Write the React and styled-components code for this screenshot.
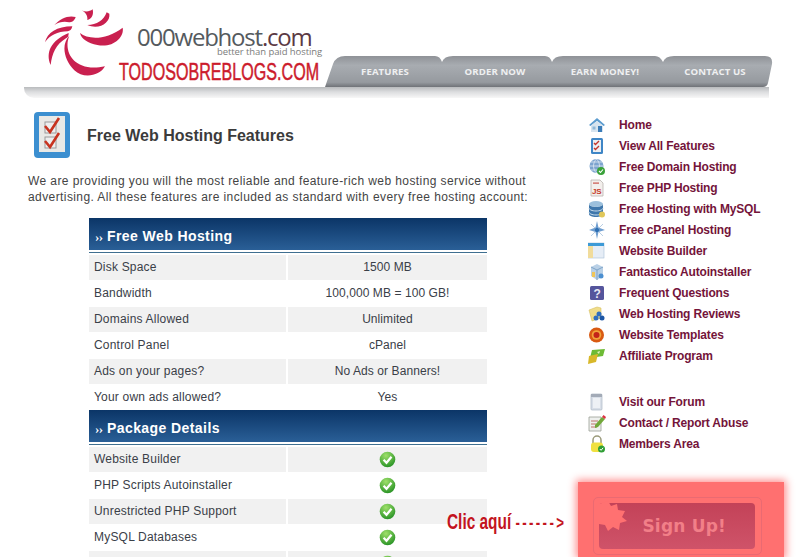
import React from "react";
import styled, { createGlobalStyle } from "styled-components";

const Global = createGlobalStyle`
  html, body { margin: 0; padding: 0; background: #fff; height: 557px; overflow: hidden; }
  #root { height: 557px; overflow: hidden; }
  * { box-sizing: border-box; }
`;
const Page = styled.div`
  width: 809px; height: 557px; overflow: hidden; position: relative;
  font-family: "Liberation Sans", Arial, sans-serif; color: #333;
`;
const Header = styled.header`display: flex; flex-direction: column; padding-left: 24px; height: 98px;`;
const HeaderTop = styled.div`display: flex; height: 63px; margin-top: 24px; position: relative;`;
const Brand = styled.div`width: 301px; flex: none; display: flex; padding-left: 21px; position: relative;`;
const LogoMark = styled.svg`position: absolute; left: 21px; top: -16px; width: 80px; height: 70px;`;
const Words = styled.div`margin-left: 71px; display: flex; flex-direction: column; align-items: flex-start;`;
const Wordmark = styled.div`
  font-family: "Open Sans", sans-serif; font-size: 24px; line-height: 26px; letter-spacing: -1.22px; color: #555a5e;
  padding-left: 21px;
  span { color: #5c3a44; }
`;
const Tagline = styled.div`
  font-family: "Open Sans", sans-serif; font-size: 9.5px; line-height: 9px; color: #7c7c7c; letter-spacing: -0.08px;
  margin-left: 101px; margin-top: -3px; white-space: nowrap;
`;
const Stamp = styled.div`
  font-size: 23.5px; line-height: 20px; color: #cc1b2c; font-weight: 400; margin-top: 6px; margin-left: 3px; white-space: nowrap;
  -webkit-text-stroke: 0.5px #cc1b2c; transform: scaleX(0.685); transform-origin: left center;
`;
const Nav = styled.nav`position: relative; width: 448px; height: 31px; margin-top: 32px; display: flex; padding-left: 5px;`;
const NavShape = styled.svg`position: absolute; left: 0; top: 0; width: 448px; height: 31px;`;
const NavLink = styled.a`
  position: relative; width: 110px; text-align: center; line-height: 31px; font-family: "Open Sans", sans-serif;
  font-size: 9.6px; font-weight: 700; color: #eff0f1; letter-spacing: 0.1px;
`;
const Band = styled.div`
  width: 745px; height: 11px; border-radius: 0 0 0 10px;
  background: linear-gradient(#b9bbbd, #dcdddf 45%, #f7f7f7);
`;
const Body = styled.div`display: flex;`;
const Main = styled.main`width: 560px; flex: none; padding: 14px 0 0 28px; position: relative;`;
const TitleRow = styled.div`display: flex; align-items: center; height: 46px; padding-left: 6px; gap: 17px;`;
const Title = styled.h1`margin: 2px 0 0; font-size: 16px; font-weight: 700; color: #3b3b3b; line-height: 20px;`;
const Intro = styled.p`
  margin: 15px 0 13px; width: 503px; font-size: 12px; line-height: 16px; color: #444; letter-spacing: 0.41px;
`;
const Table = styled.section`margin-left: 61px; width: 398px;`;
const Head = styled.div`
  height: 36px;
  h2 {
    margin: 0; height: 32px; padding-left: 6px; line-height: 36px; font-size: 14px; font-weight: 700; color: #fff; letter-spacing: 0.42px;
    background: linear-gradient(#0b3567, #2a5f97);
  }
  h2 span { font-family: "Liberation Serif", serif; font-size: 13px; letter-spacing: -0.5px; }
  &::after { content: ""; display: block; height: 1px; margin-top: 2px; background: #3f6f90; }
`;
const Row = styled.div`
  display: grid; grid-template-columns: 197px 199px; column-gap: 2px; height: 26px;
`;
const Cell = styled.div`
  height: 25px; margin-top: 1px; padding-bottom: 1px; display: flex; align-items: center; font-size: 12px; color: #3a4048;
  letter-spacing: ${p => (p.$center ? "0.08px" : "0.2px")};
  background: ${p => (p.$alt ? "#f1f1f1" : "#fff")};
  padding-left: ${p => (p.$center ? 0 : "5px")};
  justify-content: ${p => (p.$center ? "center" : "flex-start")};
`;
const Side = styled.aside`padding: 16.5px 0 0 28px; width: 249px; flex: none;`;
const Menu = styled.ul`list-style: none; margin: 0 0 25px; padding: 0;`;
const Item = styled.li`
  display: flex; align-items: center; height: 21px; gap: 13px; font-size: 12px; font-weight: 700; color: #74143a; white-space: nowrap; letter-spacing: -0.17px;
`;
const IconBox = styled.svg`width: 18px; height: 18px; flex: none;`;
const Glow = styled.div`
  margin: 27.5px 0 0 -10px; width: 206px; height: 75px; padding: 15px 0 0 15px; background: #ff7070; box-shadow: 0 0 8px 2px #ff8c8c;
`;
const SignOuter = styled.div`
  width: 169px; height: 58px; padding: 5px; border: 1px solid #ea6a72; border-radius: 5px; background: #ff7171;
`;
const SignInner = styled.a`
  position: relative; display: flex; align-items: center; justify-content: flex-end; padding-right: 29px; height: 46px; border-radius: 4px; width: 156px;
  background: linear-gradient(#c34258, #cf5369); font-family: "DejaVu Sans", sans-serif; font-weight: 700; font-size: 17px; color: #f27f88; letter-spacing: 0.2px;
`;
const Burst = styled.svg`position: absolute; left: 0; top: -2px; width: 29px; height: 30px;`;
const Hint = styled.div`
  position: absolute; left: 447px; top: 509px; color: #c3141e; white-space: nowrap; font-size: 22px; line-height: 26px; font-weight: 700;
  transform: scaleX(0.7); transform-origin: left center;
  span { font-size: 19px; font-weight: 700; margin-left: 6px; letter-spacing: 3.4px; }
`;
const Check = styled.svg`width: 17px; height: 17px;`;

const Ok = () => (
  <Check viewBox="0 0 17 17">
    <defs><radialGradient id="gk" cx="40%" cy="25%" r="85%"><stop offset="0" stopColor="#9fe06a" /><stop offset="1" stopColor="#1b8a1e" /></radialGradient></defs>
    <circle cx="8.5" cy="8.5" r="7.8" fill="url(#gk)" />
    <path d="M4.6 8.8l2.9 3 5-6" fill="none" stroke="#fff" strokeWidth="2.2" />
  </Check>
);

const icons = {
  home: <><path d="M1 9 9 2l8 7-1.500 1L9 5 2.500 10z" fill="#5c9ccf" /><path d="M3 9.500 9 5l6 4.500V16H3z" fill="#d7e4ef" /><rect x="10" y="10" width="4" height="6" fill="#3b7cb8" /><rect x="4.500" y="10.500" width="3" height="3" fill="#8fb8d8" /></>,
  list: <><rect x="3" y="1" width="12" height="16" rx="1.500" fill="#3f86c6" /><rect x="5" y="3" width="8" height="12" fill="#eceff2" /><path d="M6 6l1.500 1.500L11 4M6 11l1.500 1.500L11 9" fill="none" stroke="#c4362c" strokeWidth="1.400" /></>,
  globe: <><circle cx="8.500" cy="8" r="7" fill="#7da4cf" /><path d="M2 8h13M8.500 1c-4 4-4 10 0 14M8.500 1c4 4 4 10 0 14M3 4h11M3 12h11" stroke="#dfe9f2" strokeWidth=".8" fill="none" /><circle cx="13" cy="13" r="4" fill="#3aa23a" /><path d="M11 13l1.500 1.500 2.500-3" stroke="#fff" strokeWidth="1.100" fill="none" /></>,
  js: <><path d="M3 1h9l3 3v13H3z" fill="#f3efec" stroke="#b9b4b0" strokeWidth=".8" /><rect x="5" y="3.500" width="6" height="1.200" fill="#c9554a" /><text x="4" y="14.600" fontFamily="Liberation Sans" fontWeight="700" fontSize="8" fill="#c63a2a">JS</text></>,
  db: <><ellipse cx="8" cy="4" rx="7" ry="3" fill="#9cc0dc" /><path d="M1 4v10c0 1.600 3 3 7 3s7-1.400 7-3V4c0 1.600-3 3-7 3S1 5.600 1 4z" fill="#3f77ab" /><path d="M1 8c0 1.600 3 3 7 3s7-1.400 7-3M1 12c0 1.600 3 3 7 3s7-1.400 7-3" stroke="#c8dcec" strokeWidth="1" fill="none" /><circle cx="14" cy="14.500" r="3" fill="#e0c75a" /></>,
  star: <><path d="M9 0l1.500 6.500L17 9l-6.500 2L9 18l-1.500-7L1 9l6.500-2.500z" fill="#6f9ed0" /><path d="M3 15 15 3M3 3l12 12" stroke="#b9cfe4" strokeWidth="1" /><circle cx="9" cy="9" r="2.200" fill="#2e6fb3" /></>,
  window: <><rect x="0" y="1" width="16" height="15" fill="#e6edf6" stroke="#a9c0d8" strokeWidth=".6" /><rect x="0" y="1" width="16" height="3" fill="#3d9ad6" /><rect x="0" y="4" width="5" height="12" fill="#f1dc9c" /></>,
  box: <><path d="M3 4l6-3 6 3v9l-6 4-6-4z" fill="#b9d0e6" /><path d="M3 4l6 3 6-3M9 7v10" stroke="#6f98bf" strokeWidth=".8" fill="none" /><rect x="4" y="9" width="3" height="5" fill="#f0c55a" /><circle cx="13" cy="13" r="2.500" fill="#4b8fd0" /></>,
  help: <><rect x="2" y="2" width="14" height="14" rx="1.500" fill="#55559c" /><text x="5.500" y="14" fontFamily="Liberation Sans" fontWeight="700" fontSize="12" fill="#e9e9f5">?</text></>,
  review: <><path d="M1 5l8-3 4 1v10l-9 3z" fill="#f0dd8a" stroke="#d6bf62" strokeWidth=".6" /><circle cx="11" cy="9" r="2.500" fill="#2f6fc0" /><circle cx="8" cy="13" r="2.500" fill="#2f6fc0" /><circle cx="14" cy="13" r="2.500" fill="#1d56a5" /></>,
  target: <><circle cx="8.500" cy="9" r="7.500" fill="#d95a12" /><circle cx="8.500" cy="9" r="4.800" fill="#f1a33a" /><circle cx="8.500" cy="9" r="3" fill="#c4241a" /></>,
  money: <><path d="M4 3l13-1-2 7-13 2z" fill="#6dbb35" /><path d="M1 9l9-2-2 8-8 2z" fill="#d8b82a" /><path d="M9 5l3-1-1 3z" fill="#dff0c0" /></>,
  note: <><rect x="3" y="1" width="11" height="16" rx="1" fill="#d9dfe8" stroke="#aeb7c4" strokeWidth=".7" /><rect x="3" y="1" width="11" height="3" fill="#a3abb7" /><rect x="5" y="5" width="7" height="10" fill="#eef1f5" /></>,
  pen: <><path d="M1 3h12v14H1z" fill="#eef0ee" stroke="#9aa096" strokeWidth=".8" /><path d="M3 7h7M3 10h5M3 13h6" stroke="#b4504a" strokeWidth=".8" /><path d="M7 11 14 3l3 2-7 8-3 1z" fill="#72a83a" /><path d="M14 3l1.500-2L18 3l-1 2z" fill="#d34" /></>,
  lock: <><path d="M5 8V5a4 4 0 0 1 8 0v3" fill="none" stroke="#9a9a7a" strokeWidth="1.500" /><rect x="3" y="7.500" width="12" height="9.500" rx="3" fill="#f0e040" /><circle cx="13.500" cy="14" r="3.500" fill="#2f9e35" /><path d="M11.800 14l1.300 1.300 2-2.500" stroke="#fff" strokeWidth="1" fill="none" /></>,
};

const menuA = [
  ["home", "Home"], ["list", "View All Features"], ["globe", "Free Domain Hosting"], ["js", "Free PHP Hosting"],
  ["db", "Free Hosting with MySQL"], ["star", "Free cPanel Hosting"], ["window", "Website Builder"], ["box", "Fantastico Autoinstaller"],
  ["help", "Frequent Questions"], ["review", "Web Hosting Reviews"], ["target", "Website Templates"], ["money", "Affiliate Program"],
];
const menuB = [["note", "Visit our Forum"], ["pen", "Contact / Report Abuse"], ["lock", "Members Area"]];
const hosting = [
  ["Disk Space", "1500 MB"], ["Bandwidth", "100,000 MB = 100 GB!"], ["Domains Allowed", "Unlimited"],
  ["Control Panel", "cPanel"], ["Ads on your pages?", "No Ads or Banners!"], ["Your own ads allowed?", "Yes"],
];
const pack = ["Website Builder", "PHP Scripts Autoinstaller", "Unrestricted PHP Support", "MySQL Databases", "FTP Access"];

const Menus = ({ items }) => (
  <Menu>
    {items.map(([k, t]) => (
      <Item key={t}><IconBox viewBox="0 0 18 18">{icons[k]}</IconBox>{t}</Item>
    ))}
  </Menu>
);

export default function App() {
  return (
    <Page>
      <Global />
      <Header>
        <HeaderTop>
          <Brand>
            <LogoMark viewBox="135 25 240 210">
              <g fill="#c9204f">
                <path d="M208 108c-20 48 14 112 107 92-16 30-66 38-92 12-32-32-40-78-15-104z" />
                <path d="M240 100c24 20 78 22 128-16 6 30-32 62-76 52-28-6-48-18-52-36z" />
                <path d="M262 76c28 0 50-14 58-38l8 4c4 26-30 50-66 34z" />
                <path d="M245 32c12 6 24 4 33-3 4 18-4 30-16 32 2-12-6-24-17-29z" />
                <path d="M163 76c18-20 42-30 64-24-4 12-12 16-20 16-16-4-30 0-44 8z" />
                <path d="M135 128c6-28 36-48 82-48-2 10-8 14-14 15-30 0-54 12-68 33z" />
                <path d="M152 196c-16-36 0-74 54-96 0 8-2 14-8 16-30 18-42 46-46 80z" />
              </g>
            </LogoMark>
            <Words>
              <Wordmark>000webhost<span>.com</span></Wordmark>
              <Tagline>better than paid hosting</Tagline>
              <Stamp>TODOSOBREBLOGS.COM</Stamp>
            </Words>
          </Brand>
          <Nav>
            <NavShape viewBox="0 0 448 31">
              <defs><linearGradient id="tab" x1="0" y1="0" x2="0" y2="1"><stop offset="0" stopColor="#8f9297" /><stop offset=".3" stopColor="#a8acb1" /><stop offset=".85" stopColor="#969a9f" /><stop offset="1" stopColor="#6f7277" /></linearGradient></defs>
              <path fill="url(#tab)" d="M0 31 8 8Q11 0 20 0H110Q115 0 117 6 119 0 128 0H220Q225 0 227 6 229 0 238 0H330Q335 0 338 6 340 0 349 0H440Q448 0 447 8L443 27Q442 31 438 31Z" />
            </NavShape>
            <NavLink>FEATURES</NavLink>
            <NavLink>ORDER NOW</NavLink>
            <NavLink>EARN MONEY!</NavLink>
            <NavLink>CONTACT US</NavLink>
          </Nav>
        </HeaderTop>
        <Band />
      </Header>
      <Body>
        <Main>
          <TitleRow>
            <svg width="36" height="46" viewBox="0 0 36 46">
              <rect x="0" y="0" width="36" height="46" rx="4" fill="#3c8fd0" />
              <rect x="5" y="4" width="26" height="36" fill="#e9e9e6" />
              <rect x="11" y="10" width="11" height="11" fill="#eee" stroke="#9a9a9a" />
              <rect x="11" y="25" width="11" height="11" fill="#eee" stroke="#9a9a9a" />
              <path d="M11 14l5 6 9-14M11 29l5 6 9-14" fill="none" stroke="#c7331f" strokeWidth="2.600" />
            </svg>
            <Title>Free Web Hosting Features</Title>
          </TitleRow>
          <Intro>We are providing you will the most reliable and feature-rich web hosting service without advertising. All these features are included as standard with every free hosting account:</Intro>
          <Table>
            <Head><h2><span>››</span> Free Web Hosting</h2></Head>
            {hosting.map(([a, b], i) => (
              <Row key={a}><Cell $alt={i % 2 === 0}>{a}</Cell><Cell $alt={i % 2 === 0} $center>{b}</Cell></Row>
            ))}
            <Head><h2><span>››</span> Package Details</h2></Head>
            {pack.map((a, i) => (
              <Row key={a}><Cell $alt={i % 2 === 0}>{a}</Cell><Cell $alt={i % 2 === 0} $center><Ok /></Cell></Row>
            ))}
          </Table>
        </Main>
        <Side>
          <Menus items={menuA} />
          <Menus items={menuB} />
          <Glow>
            <SignOuter>
              <SignInner>
                <Burst viewBox="0 0 29 30"><path d="M0 3 9 0l3 5 6-2 1 6 7 1-3 6 5 4-7 2-1 7-6-3-5 4-3-6-6-1z" fill="#ff7171" /></Burst>
                Sign Up!
              </SignInner>
            </SignOuter>
          </Glow>
        </Side>
      </Body>
      <Hint>Clic aquí<span>------&gt;</span></Hint>
    </Page>
  );
}
